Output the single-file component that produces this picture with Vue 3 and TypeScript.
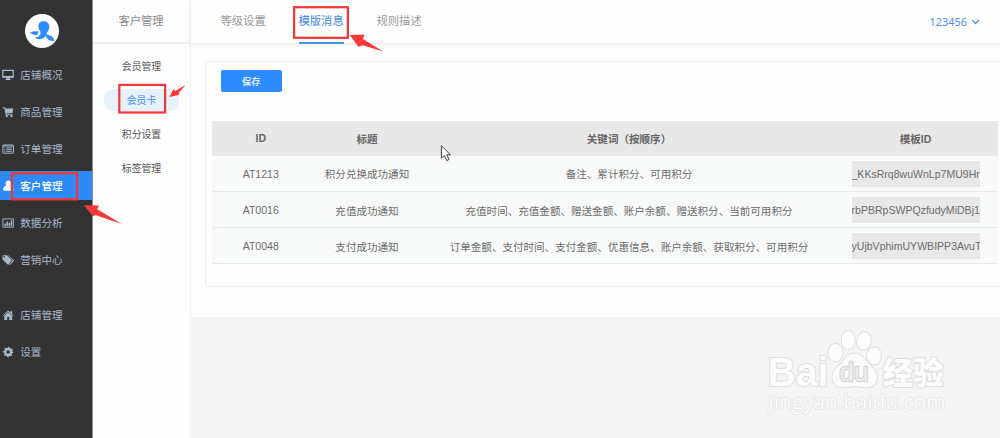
<script setup lang="ts">
interface MenuItem {
  label: string
  icon: string
  active?: boolean
  spaced?: boolean
}

interface TemplateRow {
  id: string
  title: string
  keywords: string
  template: string
}

const menu: MenuItem[] = [
  { label: '店铺概况', icon: 'monitor' },
  { label: '商品管理', icon: 'cart' },
  { label: '订单管理', icon: 'list' },
  { label: '客户管理', icon: 'user', active: true },
  { label: '数据分析', icon: 'chart' },
  { label: '营销中心', icon: 'tags' },
  { label: '店铺管理', icon: 'home', spaced: true },
  { label: '设置', icon: 'gear' },
]

const subMenu: string[] = ['会员管理', '会员卡', '积分设置', '标签管理']
const tabs: string[] = ['等级设置', '模版消息', '规则描述']

const rows: TemplateRow[] = [
  { id: 'AT1213', title: '积分兑换成功通知', keywords: '备注、累计积分、可用积分', template: '_KKsRrq8wuWnLp7MU9Hr' },
  { id: 'AT0016', title: '充值成功通知', keywords: '充值时间、充值金额、赠送金额、账户余额、赠送积分、当前可用积分', template: 'rbPBRpSWPQzfudyMiDBj1' },
  { id: 'AT0048', title: '支付成功通知', keywords: '订单金额、支付时间、支付金额、优惠信息、账户余额、获取积分、可用积分', template: 'yUjbVphimUYWBIPP3AvuT' },
]
</script>

<template>
  <div class="app">
    <aside class="sidebar">
      <svg class="logo" viewBox="0 0 34 34">
        <circle cx="17" cy="17" r="17" fill="#fff" />
        <g fill="#2d8cff">
          <path d="M13.300 12.500C13.300 9 15.500 7.200 18.600 7.200S24.300 9 24.300 12.800C24.300 16.300 21.600 18.300 21 21.300 19.500 24.800 15 26.300 9.600 23.900 13 23.200 15.600 21.500 15.600 19 15.600 17 13.300 15.500 13.300 12.500z" />
          <path d="M4.600 19.300C7 17.300 10.300 16.900 13.600 17.600 13.300 20 11.900 21.500 10 21.300 8.200 21 7.500 19.500 4.600 19.300z" />
          <path d="M20.400 20.600C25 20.700 28.600 22.500 29.300 27.100 25.200 27.300 21.300 25.500 20.400 20.600z" />
        </g>
      </svg>
      <nav class="menu">
        <div v-for="item in menu" :key="item.label" class="menu-item" :class="{ active: item.active, spaced: item.spaced }">
          <svg class="icon" viewBox="0 0 12 12">
            <g v-if="item.icon === 'monitor'">
              <path d="M.8 1.400h10.400v6.700H.8z" fill="none" stroke="currentColor" stroke-width="1.200" />
              <path d="M1 6.900h10v1.500H1zM4.700 8.500h2.800l.4 1.700h1v.8H3.300v-.8h1z" fill="currentColor" />
            </g>
            <g v-else-if="item.icon === 'cart'" fill="currentColor">
              <path d="M.8 1.200h2.300l.3 1.200h7.900l-.7 4.500-6 .7.100.6h5.800v1H3.800L2.300 2.300H.8z" />
              <circle cx="4.700" cy="10.200" r="1.100" /><circle cx="9.500" cy="10.200" r="1.100" />
            </g>
            <g v-else-if="item.icon === 'list'">
              <rect x=".9" y="2" width="10.600" height="8.200" rx=".6" fill="none" stroke="currentColor" />
              <path d="M1 3h10.400M2.300 5h1.100m.8 0h5.900M2.300 6.700h1.100m.8 0h5.900M2.300 8.400h1.100m.8 0h5.900" stroke="currentColor" stroke-width=".9" />
            </g>
            <g v-else-if="item.icon === 'user'" fill="currentColor">
              <ellipse cx="6.300" cy="3.800" rx="2.600" ry="3.200" />
              <path d="M3.900 5.700C2.100 6 1.300 7.300 1.200 9.300c0 1 .6 1.500 1.600 1.500h7c1 0 1.600-.5 1.600-1.500-.1-2-.9-3.300-2.700-3.600-1.500 1.600-3.300 1.600-4.800 0z" />
            </g>
            <g v-else-if="item.icon === 'chart'">
              <path d="M.9 1.900h10.500v8.300H.9z" fill="none" stroke="currentColor" stroke-width=".9" />
              <path d="M2.400 6.600h1.400v2.700H2.400zm2-1.800h1.500v4.500H4.400zm2.200 1h1.500v3.500H6.600zm2.100-2.600h1.500v6.100H8.700z" fill="currentColor" />
            </g>
            <g v-else-if="item.icon === 'tags'" fill="currentColor">
              <path fill-rule="evenodd" d="M.5 2.200q0-.9.900-.9h3.500l4.400 4.400q.7.700 0 1.400L6.700 10.300q-.6.600-1.300 0L1 6.100q-.5-.4-.5-1zm1.800-.1a.8.800 0 1 0 0 1.600.8.800 0 0 0 0-1.600z" />
              <path d="M6 1.300l5.400 4.500q.8.700 0 1.500L8 10.900l-.8-.5 2.900-3.100q.7-.9-.1-1.800L5.300 1.300z" />
            </g>
            <g v-else-if="item.icon === 'home'" fill="currentColor">
              <path d="M6.200 1.400L8.600 3.500V2h1.500v2.900l1.500 1.500-.6.700-4.800-4.300-4.800 4.300-.6-.7z" />
              <path d="M6.200 3.300L10.200 7v3.900H7.200V8.100h-2v2.800h-3V7z" />
            </g>
            <g v-else>
              <circle cx="6.200" cy="6" r="3" fill="none" stroke="currentColor" stroke-width="2.400" />
              <circle cx="6.200" cy="6" r="4.500" fill="none" stroke="currentColor" stroke-width="1.300" stroke-dasharray="1.767 1.767" stroke-dashoffset=".88" />
            </g>
          </svg>
          <span>{{ item.label }}</span>
        </div>
      </nav>
    </aside>

    <aside class="sub">
      <div class="sub-title">客户管理</div>
      <nav class="sub-menu">
        <div v-for="(label, i) in subMenu" :key="label" class="sub-item" :class="{ active: i === 1 }">{{ label }}</div>
      </nav>
    </aside>

    <main class="main">
      <header class="header">
        <div v-for="(tab, i) in tabs" :key="tab" class="tab" :class="{ active: i === 1 }">{{ tab }}</div>
        <div class="account">
          <span>123456</span>
          <svg class="chevron" viewBox="0 0 9 6"><path d="M1 1l3.500 3.500L8 1" fill="none" stroke="currentColor" stroke-width="1.300" /></svg>
        </div>
      </header>
      <section class="content">
        <div class="panel">
          <button class="save">保存</button>
          <div class="table">
            <div class="row head">
              <span>ID</span><span>标题</span><span>关键词（按顺序）</span><span>模板ID</span>
            </div>
            <div v-for="row in rows" :key="row.id" class="row">
              <span>{{ row.id }}</span>
              <span>{{ row.title }}</span>
              <span>{{ row.keywords }}</span>
              <span><span class="field">{{ row.template }}</span></span>
            </div>
          </div>
        </div>
      </section>
    </main>

    <svg class="overlay" viewBox="0 0 1000 438">
      <g class="brand" fill="#fcfcfc" stroke="#dfdfdf" stroke-width="2" stroke-linejoin="round" paint-order="stroke">
        <text x="767.500" y="386" font-size="41" font-weight="700" textLength="61" lengthAdjust="spacingAndGlyphs">Bai</text>
        <ellipse cx="835.500" cy="352.500" rx="7" ry="8.800" />
        <ellipse cx="848.200" cy="340" rx="6.500" ry="9.200" />
        <ellipse cx="864" cy="341" rx="6.800" ry="8.800" transform="rotate(8 864 341)" />
        <ellipse cx="874" cy="356" rx="7" ry="8.500" />
        <path d="M854.500 353.500c6 0 9.500 5 13.500 9.500 4.500 4.500 9 8 9 14.500 0 6-4.500 9.800-10.500 9.800-4.500 0-8-1.300-12-1.300s-7.500 1.300-12 1.300c-6 0-10-3.800-10-9.800 0-6.500 4.500-10 9-14.500 4-4.500 7-9.500 13-9.500z" />
        <text x="839.500" y="381" font-size="25" fill="#ededed" stroke="#d6d6d6" stroke-width="2.400" textLength="29" lengthAdjust="spacingAndGlyphs">du</text>
        <text class="cjk" x="882.500" y="383.500" font-size="31" font-weight="900" textLength="61" lengthAdjust="spacingAndGlyphs">经验</text>
        <text class="domain" x="768.500" y="409" font-size="20" stroke="#e4e4e4" stroke-width="1.600" textLength="177" lengthAdjust="spacingAndGlyphs">jingyan.baidu.com</text>
      </g>
      <g fill="none" stroke="#f63535" stroke-width="2.200">
        <rect x="11.900" y="173.300" width="65.200" height="26" />
        <rect x="119.300" y="84.900" width="45.800" height="27.600" />
        <rect x="294.100" y="7.200" width="53.800" height="30.600" />
      </g>
      <g fill="#fa3838">
        <path d="M84 205.300l15 .2-1.800 3.700 24.600 14.800-26.600-9-2.200 1.200z" />
        <path d="M169.200 97l4.600-8.300 1.400 2.200 10.400-6-6.900 8.100.8 1.800z" />
        <path d="M349.700 35l14.700-.4-1.400 4.300 20.200 12.700-20.500-6.400-4.300 1.500z" />
      </g>
      <path d="M441.400 145.700v12.600l2.900-2.700 2.500 5 2.300-1.200-2.400-4.700h3.700z" fill="#fff" stroke="#333" stroke-width=".9" />
    </svg>
  </div>
</template>

<style>
html, body { margin: 0; overflow: hidden; }
</style>

<style scoped>
.app {
  position: relative;
  display: flex;
  width: 1000px;
  height: 438px;
  overflow: hidden;
  background: #f5f5f5;
  font-family: "Liberation Sans", "Noto Sans CJK SC", sans-serif;
  font-size: 10.55px;
  color: #6c6c6c;
}
.app * { box-sizing: border-box; }
.sidebar {
  width: 92.500px;
  flex: none;
  background: #333;
  border-right: 1px solid #8c8c8c;
}
.logo { display: block; width: 34px; height: 34px; margin: 13.500px 0 0 25px; }
.menu { display: flex; flex-direction: column; gap: 7.700px; margin-top: 12.700px; }
.menu-item {
  height: 29.300px;
  display: flex;
  align-items: center;
  padding-left: 2px;
  color: #a9b9c9;
}
.menu-item span { margin-top: -1px; }
.menu-item.active { background: #2d8af8; color: #fff; font-weight: 500; }
.menu-item.spaced { margin-top: 18.500px; }
.icon { width: 12px; height: 12px; margin-right: 6.300px; }
.sub {
  width: 98px;
  flex: none;
  background: #fefefe;
  border-right: 1px solid #f1f1f1;
}
.sub-title {
  height: 44px;
  line-height: 43px;
  border-bottom: 2px solid #f1f1f1;
  text-align: center;
  font-size: 11.300px;
  color: #8a8a8a;
}
.sub-menu { padding: 11px 10.500px 0 11.500px; display: flex; flex-direction: column; gap: 11.500px; }
.sub-item {
  height: 22.400px;
  line-height: 24px;
  border-radius: 9px;
  text-align: center;
  font-size: 9.850px;
  color: #555;
}
.sub-item.active { background: #e6f1fe; color: #3d8bee; }
.main { flex: 1; min-width: 0; }
.header {
  height: 43px;
  display: flex;
  gap: 32.800px;
  padding: 0 20px 0 30px;
  background: #fefefe;
  box-shadow: 0 1px 3px 1px #ededed;
  position: relative;
  font-size: 11.300px;
  color: #999;
}
.tab { height: 43.500px; line-height: 43px; border-bottom: 2px solid transparent; }
.tab.active { color: #3f8ae6; border-color: #4594f0; }
.account {
  margin-left: auto;
  display: flex;
  align-items: center;
  gap: 4px;
  margin-top: -1px;
  font-family: "Noto Sans", "Noto Sans CJK SC", sans-serif;
  font-size: 10.900px;
  color: #4a90e8;
}
.chevron { width: 9px; height: 6px; margin-top: 1px; }
.content { height: 274px; background: #fefefe; padding: 18px 0 0 14.500px; }
.panel {
  width: 810px;
  height: 226px;
  border: 1.500px solid #ededed;
  border-radius: 2px;
  padding: 8px 0 0 6px;
}
.save {
  display: block;
  width: 60.500px;
  height: 21.500px;
  margin-left: 9px;
  padding: 0;
  border: 0;
  border-radius: 2px;
  background: #2d8cff;
  color: #fff;
  font-family: inherit;
  font-size: 9.200px;
  font-weight: 500;
}
.table { width: 785.500px; margin-top: 29px; }
.row {
  display: grid;
  grid-template-columns: 97.500px 115px 409px 164px;
  align-items: center;
  justify-items: center;
  height: 36.100px;
  padding-top: 1px;
  background: #f8faf9;
  border-bottom: 1px solid #e9ebea;
  white-space: nowrap;
}
.row.head { height: 35.400px; padding-top: 0; background: #e8e8e8; border: 0; font-weight: 700; color: #666; }
.field {
  display: block;
  width: 128px;
  height: 26.400px;
  line-height: 26.400px;
  overflow: hidden;
  background: #e8e8e8;
}
.overlay { position: absolute; left: 0; top: 0; width: 1000px; height: 438px; pointer-events: none; }
.brand { font-family: "Liberation Sans", sans-serif; }
.cjk { font-family: "Noto Sans CJK SC", sans-serif; }
.domain { font-family: "Open Sans", "Noto Sans", sans-serif; }
</style>
